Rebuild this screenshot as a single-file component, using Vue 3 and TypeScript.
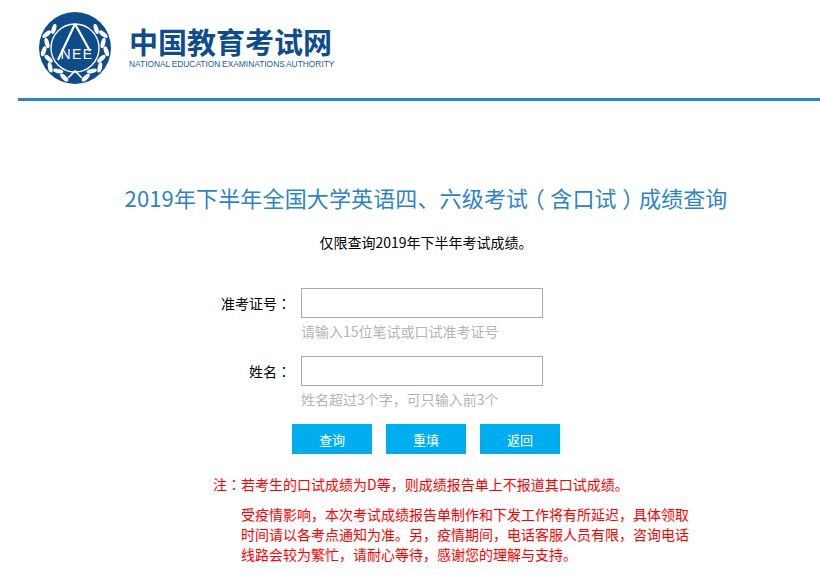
<template>
  <div class="page">
    <header class="head">
      <svg class="logo" width="72" height="72" viewBox="0 0 72 72">
        <circle cx="36" cy="36" r="36" fill="#0f4c8c" />
        <circle cx="36" cy="36" r="24" fill="none" stroke="#fff" stroke-width="1.4" />
        <ellipse
          v-for="(leaf, i) in leaves"
          :key="i"
          :cx="leaf.x"
          :cy="leaf.y"
          rx="5.2"
          ry="2.2"
          fill="#fff"
          :transform="`rotate(${leaf.a} ${leaf.x} ${leaf.y})`"
        />
        <path d="M19 36 H55 V49 H19 Z" fill="#0f4c8c" />
        <path d="M36 12 L19 48 M36 12 L51 39" fill="none" stroke="#fff" stroke-width="2.2" />
        <path d="M29 66 L36 59 L43 66" fill="none" stroke="#fff" stroke-width="1.6" />
        <text x="38" y="47" class="nee" text-anchor="middle">NEE</text>
      </svg>
      <div class="brand">
        <div class="brand-cn">中国教育考试网</div>
        <div class="brand-en">NATIONAL EDUCATION EXAMINATIONS AUTHORITY</div>
      </div>
    </header>

    <h1 class="title">2019年下半年全国大学英语四、六级考试<span class="paren">（</span>含口试<span class="paren">）</span>成绩查询</h1>
    <p class="sub">仅限查询2019年下半年考试成绩。</p>

    <form class="form" @submit.prevent>
      <div class="row" v-for="field in fields" :key="field.label">
        <label class="label">{{ field.label }}<span class="tc">：</span></label>
        <div>
          <input class="input" type="text" />
          <p class="hint">{{ field.hint }}</p>
        </div>
      </div>
      <div class="btns">
        <button class="btn" type="button">查询</button>
        <button class="btn" type="button">重填</button>
        <button class="btn" type="button">返回</button>
      </div>
    </form>

    <div class="notes">
      <p class="note">注<span class="tc">：</span>若考生的口试成绩为D等，则成绩报告单上不报道其口试成绩。</p>
      <p class="para">受疫情影响，本次考试成绩报告单制作和下发工作将有所延迟，具体领取时间请以各考点通知为准。另，疫情期间，电话客服人员有限，咨询电话线路会较为繁忙，请耐心等待，感谢您的理解与支持。</p>
    </div>
  </div>
</template>

<script setup lang="ts">
const fields = [
  { label: '准考证号', hint: '请输入15位笔试或口试准考证号' },
  { label: '姓名', hint: '姓名超过3个字，可只输入前3个' }
]

// 月桂叶沿圆环两侧排列
const leaves: { x: number; y: number; a: number }[] = []
for (let i = 0; i < 8; i++) {
  const deg = 20 + i * 16
  const rad = (deg * Math.PI) / 180
  const r = i % 2 === 0 ? 31.5 : 28.5
  const dy = Math.cos(rad) * r
  const dx = Math.sin(rad) * r
  const tilt = i % 2 === 0 ? 25 : -25
  leaves.push({ x: 36 - dx, y: 36 + dy, a: deg + tilt })
  leaves.push({ x: 36 + dx, y: 36 + dy, a: -deg - tilt })
}
</script>

<style>
html,
body {
  margin: 0;
  overflow: hidden;
  background: #fff;
}
</style>

<style scoped>
.page {
  width: 816px;
  margin-left: 18px;
  font-family: "Noto Sans CJK SC", "Liberation Sans", sans-serif;
  font-size: 14px;
  color: #000;
}

.tc {
  font-family: "Noto Sans CJK TC", sans-serif;
}

/* 括号半宽后左右留白，看起来在字宽内居中 */
.paren {
  font-feature-settings: "halt";
  padding: 0 5.5px;
}

.head {
  height: 98px;
  border-bottom: 3px solid #2d83c9;
  display: flex;
  align-items: flex-start;
}

.logo {
  margin: 12px 0 0 21px;
  flex: none;
}

.brand {
  margin: 26px 0 0 18px;
}

.brand-cn {
  font-size: 29px;
  line-height: 30px;
  font-weight: 700;
  color: #0f4c8c;
}

.brand-en {
  font-family: "Liberation Sans", sans-serif;
  font-size: 8.4px;
  line-height: 12px;
  margin-top: 2px;
  color: #1c5a9c;
  white-space: nowrap;
  word-spacing: -0.6px;
}

.nee {
  font-family: "Liberation Sans", sans-serif;
  font-size: 14px;
  letter-spacing: 1.4px;
  fill: #fff;
}

.title {
  margin: 80px 0 0;
  font-size: 22px;
  line-height: 32px;
  font-weight: 400;
  letter-spacing: 0.14px;
  color: #2d83c9;
  text-align: center;
  white-space: nowrap;
}

.sub {
  margin: 19px 0 0;
  line-height: 20px;
  text-align: center;
}

.form {
  margin-top: 36px;
}

.row {
  display: flex;
  margin-bottom: 15px;
}

.label {
  width: 273px;
  line-height: 30px;
  margin-right: 10px;
  text-align: right;
}

.input {
  display: block;
  width: 242px;
  height: 30px;
  box-sizing: border-box;
  border: 1px solid #aaa;
  padding: 0 6px;
  outline: none;
}

.hint {
  margin: 3px 0 0;
  line-height: 20px;
  color: #b4b4b4;
}

.btns {
  display: flex;
  gap: 14px;
  margin: 0 0 0 274px;
}

.btn {
  width: 80px;
  height: 30px;
  border: 0;
  padding: 1px 0 0;
  background: #00aeef;
  color: #fff;
  font: inherit;
  font-size: 13px;
}

.notes {
  margin-top: 20px;
  color: #f00;
  line-height: 20px;
}

.note {
  margin: 0 0 0 195px;
}

.para {
  margin: 10px 0 0 223px;
  width: 450px;
}
</style>
